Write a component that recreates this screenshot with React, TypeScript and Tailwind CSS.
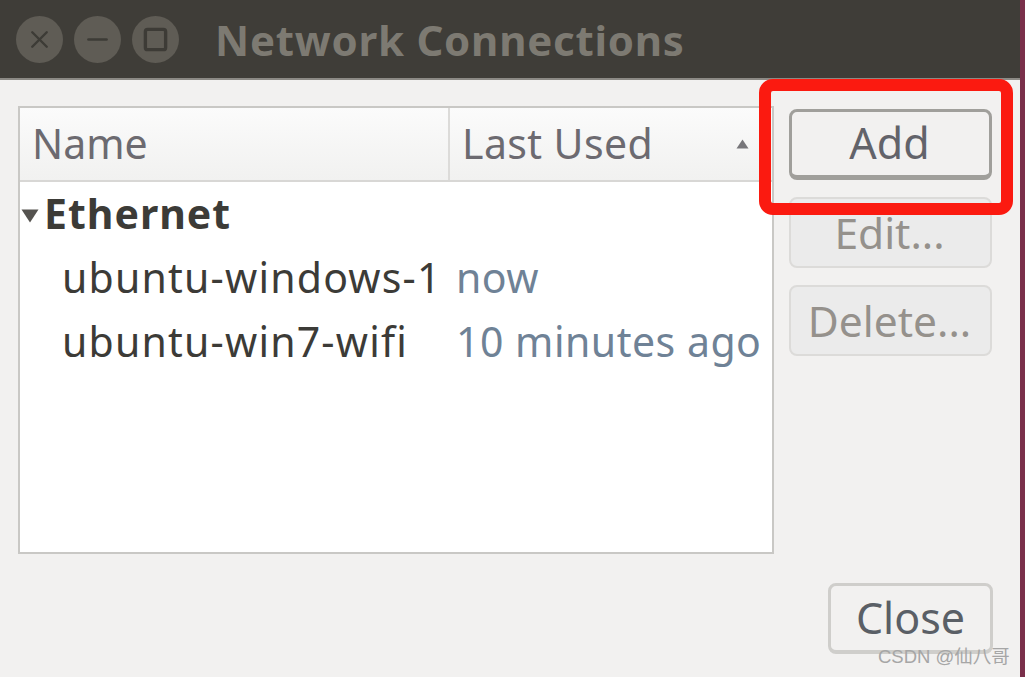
import { Minus, Square, X } from "lucide-react"

const font = { fontFamily: '"Noto Sans", sans-serif' }

function WinButton({ children }: { children: React.ReactNode }) {
  return (
    <div className="flex h-[47px] w-[47px] items-center justify-center rounded-full bg-[#5f5c55] text-[#3d3b36]">
      {children}
    </div>
  )
}

function Row({ name, used }: { name: string; used: string }) {
  return (
    <div className="flex h-[64px] items-center">
      <div className="w-[436px] shrink-0 pl-[42px] tracking-[1.2px] text-[#3c3b37]">{name}</div>
      <div className="whitespace-nowrap tracking-[0.5px] text-[#6f8296]">{used}</div>
    </div>
  )
}

function SideButton({ label, disabled }: { label: string; disabled?: boolean }) {
  return (
    <div
      className={
        disabled
          ? "flex h-[71px] w-[203px] items-center justify-center rounded-[8px] border-2 border-[#dcdbd9] bg-[#ebebeb] pr-[2px] text-[42.5px] text-[#95918c]"
          : "flex h-[71px] w-[203px] items-center justify-center rounded-[8px] border-[3px] border-[#a09f9b] border-b-[5px] bg-[#f2f1f0] pr-[2px] text-[43px] text-[#62636a]"
      }
    >
      {label}
    </div>
  )
}

export default function App() {
  return (
    <div className="relative flex h-[677px] w-[1025px] overflow-hidden bg-[#7a2f4a]" style={font}>
      <div className="flex w-[1020px] flex-col bg-[#f2f1f0]">
        {/* title bar */}
        <div className="flex h-[80px] shrink-0 items-center gap-[11px] border-b-2 border-[#8c8a85] bg-[#3f3d38] pl-[16px]">
          <WinButton>
            <X size={29} strokeWidth={2} />
          </WinButton>
          <WinButton>
            <Minus size={31} strokeWidth={2} />
          </WinButton>
          <WinButton>
            <Square size={27} strokeWidth={3} />
          </WinButton>
          <div className="ml-[25px] mt-[1px] text-[42px] font-bold tracking-[0.75px] text-[#7d7a72]">Network Connections</div>
        </div>

        <div className="flex flex-1 flex-col px-[18px] pt-[26px]">
          <div className="flex">
            {/* connection list */}
            <div className="h-[448px] w-[756px] shrink-0 border-2 border-[#c9c8c5] bg-white text-[41px]">
              <div className="flex h-[74px] items-center border-b-2 border-[#d8d7d5] bg-gradient-to-b from-[#fbfbfb] to-[#f1f1f0] text-[#6c6a70]">
                <div className="flex h-full w-[430px] items-center border-r-2 border-[#dcdbd9] pl-[12px]">Name</div>
                <div className="flex flex-1 items-center justify-between pl-[12px] pr-[23px]">
                  <span className="tracking-[0.4px]">Last Used</span>
                  <svg width="13" height="10" viewBox="0 0 13 10" className="text-[#77767a]">
                    <path d="M6.5 0.5 L12.5 9.5 H0.5 Z" fill="currentColor" />
                  </svg>
                </div>
              </div>
              <div className="flex h-[64px] items-center text-[#3c3b37]">
                <svg width="18" height="14" viewBox="0 0 18 14" className="ml-[1px] mt-[4px] text-[#55534f]">
                  <path d="M0.5 0.5 H17.5 L9 13.5 Z" fill="currentColor" />
                </svg>
                <span className="ml-[5px] font-bold tracking-[1px]">Ethernet</span>
              </div>
              <Row name="ubuntu-windows-1" used="now" />
              <Row name="ubuntu-win7-wifi" used="10 minutes ago" />
            </div>

            {/* side buttons */}
            <div className="ml-[15px] flex flex-col gap-[17px] pt-[3px]">
              <SideButton label="Add" />
              <SideButton label="Edit..." disabled />
              <SideButton label="Delete..." disabled />
            </div>
          </div>

          <div className="mt-[29px] flex justify-end pr-[9px]">
            <div className="flex h-[71px] w-[165px] items-center justify-center rounded-[8px] border-[3px] border-[#cfcecb] border-b-[4px] bg-[#f2f1f0] text-[43px] text-[#5a5f66]">
              Close
            </div>
          </div>
        </div>
      </div>

      {/* red highlight drawn over the screenshot */}
      <div className="absolute left-[759px] top-[79px] h-[136px] w-[254px] rounded-[14px] border-[12px] border-[#fb1a10]" />

      <div
        className="absolute left-[878px] top-[644px] whitespace-nowrap text-[18.5px] leading-[26px] text-[#a6a6a6]"
        style={{ fontFamily: '"Liberation Sans", "Noto Sans CJK SC", sans-serif' }}
      >
        CSDN @仙八哥
      </div>
    </div>
  )
}
